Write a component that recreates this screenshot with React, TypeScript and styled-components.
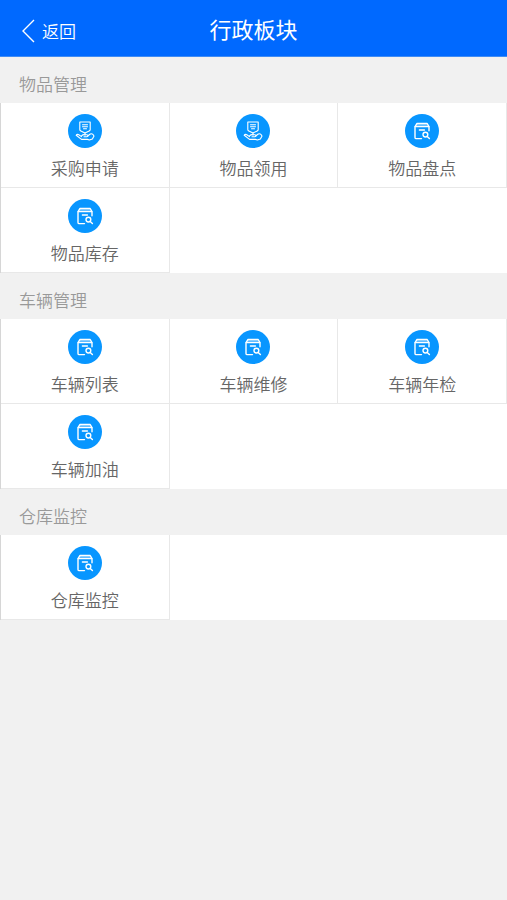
import React from "react";
import styled, { createGlobalStyle } from "styled-components";

const GlobalStyle = createGlobalStyle`
  *, *::before, *::after { box-sizing: border-box; }
  body {
    margin: 0;
    background: #f1f1f1;
    font-family: "Noto Sans CJK SC", "Noto Sans", sans-serif;
    font-weight: 350;
  }
`;

const TopBar = styled.header`
  display: grid;
  grid-template-columns: 1fr auto 1fr;
  align-items: center;
  height: 57px;
  padding: 0 20px;
  background: #0069ff;
  border-bottom: 1px solid #3f8cf5;
  color: #fff;
`;

const BackButton = styled.button`
  display: flex;
  align-items: center;
  justify-self: start;
  gap: 6px;
  padding: 6px 0 0;
  border: 0;
  background: none;
  color: inherit;
  font: inherit;
  font-size: 17px;
  line-height: 24px;
  cursor: pointer;
`;

const Title = styled.h1`
  margin: 0;
  font-size: 22px;
  line-height: 32px;
  font-weight: 400;
`;

const SectionTitle = styled.h2`
  margin: 0;
  padding: 15px 19px 7px;
  font-size: 17px;
  line-height: 24px;
  font-weight: 350;
  color: #999;
`;

const Grid = styled.div`
  display: grid;
  grid-template-columns: repeat(3, 1fr);
  background: #fff;
  border-left: 1px solid #d6d6d6;
`;

const Tile = styled.button`
  display: flex;
  flex-direction: column;
  align-items: center;
  gap: 8px;
  height: 85px;
  padding: 11px 0 0;
  border: 0;
  border-right: 1px solid #e8e8e8;
  border-bottom: 1px solid #e8e8e8;
  background: #fff;
  color: #666;
  font: inherit;
  font-size: 17px;
  line-height: 24px;
  cursor: pointer;
`;

const Badge = styled.span`
  display: grid;
  place-items: center;
  width: 34px;
  height: 34px;
  border-radius: 50%;
  background: #0896ff;
`;

const ChevronIcon = () => (
  <svg width="16" height="24" viewBox="0 0 16 24" fill="none" stroke="#fff" strokeWidth="1.4" aria-hidden="true">
    <path d="M14 1 3 12l11 11" />
  </svg>
);

const BoxSearchIcon = () => (
  <svg width="20" height="20" viewBox="0 0 20 20" fill="none" stroke="#fff" strokeWidth="1.4" strokeLinecap="round" strokeLinejoin="round" aria-hidden="true">
    <path d="M9.5 17.6H4.2q-1.2 0-1.2-1.2V5.6L5 2.5h10.2L17 5.6v4.2" />
    <path d="M3.2 5.6h13.6" />
    <path d="M4.8 4h10.6" strokeOpacity="0.5" />
    <path d="M7.4 9h5" />
    <circle cx="13.4" cy="13.6" r="2.4" />
    <path d="m15.2 15.4 2.2 2.2" />
  </svg>
);

const HandShieldIcon = () => (
  <svg width="20" height="20" viewBox="0 0 20 20" fill="none" stroke="#fff" strokeWidth="1.1" strokeLinecap="round" strokeLinejoin="round" aria-hidden="true">
    <path d="M4.8 1h10.4v7.4q0 1-1 1.5L10 12 5.8 9.900q-1-.5-1-1.500z" />
    <path d="M7.500 3.800h5M7.500 5.800h5M8.500 7.800h3M10 12v2" />
    <path d="M6.500 14.800q1.500-1.300 3-1.100h2.300q1.200.1 1.200 1t-1.200 1H9" />
    <path d="m13 14.800 2.300-1.800q1.500-.6 2.500.3l1.200 1.700-1.600 2.900-3 1.100-2-.6H6.500L1.200 14.200q.9-1.400 2.600-.5l2.700 1.900" />
  </svg>
);

const icons = { hand: HandShieldIcon, box: BoxSearchIcon };

type Item = { label: string; icon: keyof typeof icons };

const sections: { title: string; items: Item[] }[] = [
  {
    title: "物品管理",
    items: [
      { label: "采购申请", icon: "hand" },
      { label: "物品领用", icon: "hand" },
      { label: "物品盘点", icon: "box" },
      { label: "物品库存", icon: "box" },
    ],
  },
  {
    title: "车辆管理",
    items: [
      { label: "车辆列表", icon: "box" },
      { label: "车辆维修", icon: "box" },
      { label: "车辆年检", icon: "box" },
      { label: "车辆加油", icon: "box" },
    ],
  },
  { title: "仓库监控", items: [{ label: "仓库监控", icon: "box" }] },
];

export default function App() {
  return (
    <>
      <GlobalStyle />
      <TopBar>
        <BackButton type="button">
          <ChevronIcon />
          返回
        </BackButton>
        <Title>行政板块</Title>
      </TopBar>
      <main>
        {sections.map((section) => (
          <section key={section.title}>
            <SectionTitle>{section.title}</SectionTitle>
            <Grid>
              {section.items.map(({ label, icon }) => {
                const Icon = icons[icon];
                return (
                  <Tile key={label} type="button">
                    <Badge>
                      <Icon />
                    </Badge>
                    {label}
                  </Tile>
                );
              })}
            </Grid>
          </section>
        ))}
      </main>
    </>
  );
}
